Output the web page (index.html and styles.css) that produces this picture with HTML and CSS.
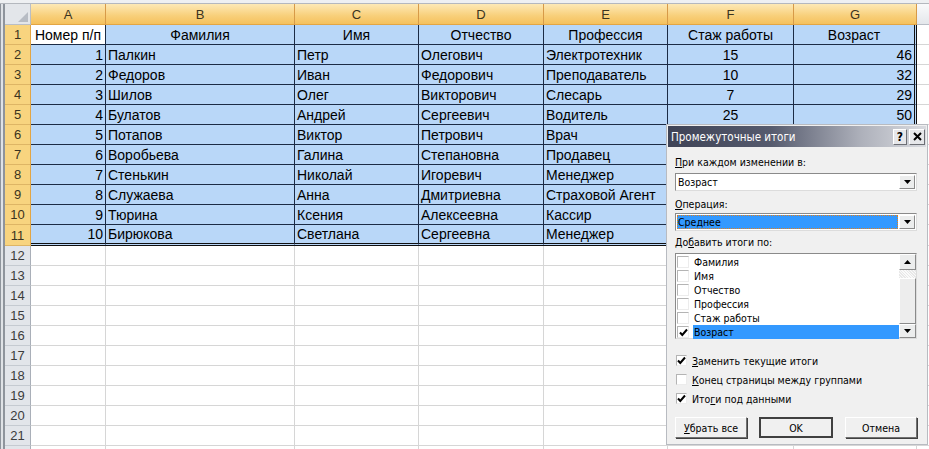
FILE: index.html
```html
<!DOCTYPE html>
<html lang="ru">
<head>
    <meta charset="UTF-8">
    <title>Промежуточные итоги</title>
    <link rel="stylesheet" href="styles.css">
</head>
<body>
<div class="sheet">
    <table class="grid">
        <thead>
            <tr>
                <th class="corner"><svg width="10" height="10" viewBox="0 0 10 10"><polygon points="10,0 10,10 0,10" fill="#b7bcc4"/></svg></th>
                <th class="ch on w-a">A</th>
                <th class="ch on w-b">B</th>
                <th class="ch on w-c">C</th>
                <th class="ch on w-d">D</th>
                <th class="ch on w-e">E</th>
                <th class="ch on w-f">F</th>
                <th class="ch on w-g">G</th>
                <th class="ch w-h"></th>
            </tr>
        </thead>
        <tbody>
            <tr class="s"><th class="rh on">1</th><td class="c act">Номер п/п</td><td class="c">Фамилия</td><td class="c">Имя</td><td class="c">Отчество</td><td class="c">Профессия</td><td class="c">Стаж работы</td><td class="c g">Возраст</td><td class="x"></td></tr>
            <tr class="s"><th class="rh on">2</th><td class="r">1</td><td>Палкин</td><td>Петр</td><td>Олегович</td><td>Электротехник</td><td class="c">15</td><td class="r g">46</td><td class="x"></td></tr>
            <tr class="s"><th class="rh on">3</th><td class="r">2</td><td>Федоров</td><td>Иван</td><td>Федорович</td><td>Преподаватель</td><td class="c">10</td><td class="r g">32</td><td class="x"></td></tr>
            <tr class="s"><th class="rh on">4</th><td class="r">3</td><td>Шилов</td><td>Олег</td><td>Викторович</td><td>Слесарь</td><td class="c">7</td><td class="r g">29</td><td class="x"></td></tr>
            <tr class="s"><th class="rh on">5</th><td class="r">4</td><td>Булатов</td><td>Андрей</td><td>Сергеевич</td><td>Водитель</td><td class="c">25</td><td class="r g">50</td><td class="x"></td></tr>
            <tr class="s"><th class="rh on">6</th><td class="r">5</td><td>Потапов</td><td>Виктор</td><td>Петрович</td><td>Врач</td><td class="c"></td><td class="r g"></td><td class="x"></td></tr>
            <tr class="s"><th class="rh on">7</th><td class="r">6</td><td>Воробьева</td><td>Галина</td><td>Степановна</td><td>Продавец</td><td class="c"></td><td class="r g"></td><td class="x"></td></tr>
            <tr class="s"><th class="rh on">8</th><td class="r">7</td><td>Стенькин</td><td>Николай</td><td>Игоревич</td><td>Менеджер</td><td class="c"></td><td class="r g"></td><td class="x"></td></tr>
            <tr class="s"><th class="rh on">9</th><td class="r">8</td><td>Служаева</td><td>Анна</td><td>Дмитриевна</td><td>Страховой Агент</td><td class="c"></td><td class="r g"></td><td class="x"></td></tr>
            <tr class="s"><th class="rh on">10</th><td class="r">9</td><td>Тюрина</td><td>Ксения</td><td>Алексеевна</td><td>Кассир</td><td class="c"></td><td class="r g"></td><td class="x"></td></tr>
            <tr class="s last"><th class="rh on">11</th><td class="r">10</td><td>Бирюкова</td><td>Светлана</td><td>Сергеевна</td><td>Менеджер</td><td class="c"></td><td class="r g"></td><td class="x"></td></tr>
            <tr><th class="rh">12</th><td></td><td></td><td></td><td></td><td></td><td></td><td></td><td></td></tr>
            <tr><th class="rh">13</th><td></td><td></td><td></td><td></td><td></td><td></td><td></td><td></td></tr>
            <tr><th class="rh">14</th><td></td><td></td><td></td><td></td><td></td><td></td><td></td><td></td></tr>
            <tr><th class="rh">15</th><td></td><td></td><td></td><td></td><td></td><td></td><td></td><td></td></tr>
            <tr><th class="rh">16</th><td></td><td></td><td></td><td></td><td></td><td></td><td></td><td></td></tr>
            <tr><th class="rh">17</th><td></td><td></td><td></td><td></td><td></td><td></td><td></td><td></td></tr>
            <tr><th class="rh">18</th><td></td><td></td><td></td><td></td><td></td><td></td><td></td><td></td></tr>
            <tr><th class="rh">19</th><td></td><td></td><td></td><td></td><td></td><td></td><td></td><td></td></tr>
            <tr><th class="rh">20</th><td></td><td></td><td></td><td></td><td></td><td></td><td></td><td></td></tr>
            <tr><th class="rh">21</th><td></td><td></td><td></td><td></td><td></td><td></td><td></td><td></td></tr>
            <tr><th class="rh"></th><td></td><td></td><td></td><td></td><td></td><td></td><td></td><td></td></tr>
        </tbody>
    </table>

    <!-- диалог поверх листа -->
    <div class="dialog">
        <div class="dlg-title">
            <span class="dlg-caption">Промежуточные итоги</span>
            <span class="tbtn help">?</span>
            <span class="tbtn close"><svg width="9" height="9" viewBox="0 0 9 9"><path d="M1 1 L8 8 M8 1 L1 8" stroke="#000" stroke-width="2"/></svg></span>
        </div>
        <div class="dlg-body">
            <div class="lbl lbl-first"><u>П</u>ри каждом изменении в:</div>
            <div class="combo">
                <span class="combo-val">Возраст</span>
                <span class="drop"><svg width="7" height="4" viewBox="0 0 7 4"><polygon points="0,0 7,0 3.5,4" fill="#000"/></svg></span>
            </div>
            <div class="lbl lbl-op"><u>О</u>перация:</div>
            <div class="combo">
                <span class="combo-val picked">Среднее</span>
                <span class="drop"><svg width="7" height="4" viewBox="0 0 7 4"><polygon points="0,0 7,0 3.5,4" fill="#000"/></svg></span>
            </div>
            <div class="lbl lbl-add">До<u>б</u>авить итоги по:</div>
            <div class="listbox">
                <div class="items">
                    <div class="item"><span class="box"></span><span class="item-text">Фамилия</span></div>
                    <div class="item"><span class="box"></span><span class="item-text">Имя</span></div>
                    <div class="item"><span class="box"></span><span class="item-text">Отчество</span></div>
                    <div class="item"><span class="box"></span><span class="item-text">Профессия</span></div>
                    <div class="item"><span class="box"></span><span class="item-text">Стаж работы</span></div>
                    <div class="item"><span class="box"><svg width="9" height="9" viewBox="0 0 9 9"><path d="M1 4.5 L3.3 7 L8 1.5" stroke="#000" stroke-width="2" fill="none"/></svg></span><span class="item-text hl">Возраст</span></div>
                </div>
                <div class="vscroll">
                    <span class="sbtn"><svg width="7" height="4" viewBox="0 0 7 4"><polygon points="0,4 7,4 3.5,0" fill="#000"/></svg></span>
                    <span class="track"></span>
                    <span class="thumb"></span>
                    <span class="sbtn"><svg width="7" height="4" viewBox="0 0 7 4"><polygon points="0,0 7,0 3.5,4" fill="#000"/></svg></span>
                </div>
            </div>
            <div class="checks">
                <div class="chk"><span class="box"><svg width="9" height="9" viewBox="0 0 9 9"><path d="M1 4.5 L3.3 7 L8 1.5" stroke="#000" stroke-width="2" fill="none"/></svg></span><span><u>З</u>аменить текущие итоги</span></div>
                <div class="chk"><span class="box"></span><span><u>К</u>онец страницы между группами</span></div>
                <div class="chk"><span class="box"><svg width="9" height="9" viewBox="0 0 9 9"><path d="M1 4.5 L3.3 7 L8 1.5" stroke="#000" stroke-width="2" fill="none"/></svg></span><span>Ито<u>г</u>и под данными</span></div>
            </div>
            <div class="buttons">
                <button class="btn"><u>У</u>брать все</button>
                <button class="btn default">OK</button>
                <button class="btn">Отмена</button>
            </div>
        </div>
    </div>
</div>
</body>
</html>
```

FILE: styles.css
```css
* {
    margin: 0;
    padding: 0;
    box-sizing: border-box;
}

body {
    width: 929px;
    height: 449px;
    overflow: hidden;
    background: #fff;
    font-family: "Liberation Sans", Arial, sans-serif;
}

.sheet {
    position: relative;
    height: 449px;
    padding: 4px 0 0 5px;
    background:
        linear-gradient(#eef0f2 0 3px, #b4b8be 3px 4px) top left / 100% 4px no-repeat,
        linear-gradient(to right, #8e949c 0 1px, #dfe2e6 1px 3px, #8e949c 3px 5px) top left / 5px 100% no-repeat;
}

/* ---- сетка листа ---- */
.grid {
    border-collapse: separate;
    border-spacing: 0;
    table-layout: fixed;
    width: 972px;
}

.grid td {
    height: 20px;
    padding: 0 2px;
    border-right: 1px solid #d6d6d6;
    border-bottom: 1px solid #d6d6d6;
    font-size: 14px;
    line-height: 18px;
    color: #000;
    white-space: nowrap;
    overflow: hidden;
}

.grid td.r { text-align: right; }
.grid td.c { text-align: center; }

.corner {
    width: 26px;
    height: 21px;
    background: #e3e6ea;
    border-right: 1px solid #b9bec6;
    border-bottom: 1px solid #b9bec6;
    text-align: right;
    vertical-align: bottom;
    padding: 0 2px 2px 0;
    line-height: 0;
}

.ch {
    height: 21px;
    font-size: 13px;
    font-weight: normal;
    color: #3a3a3a;
    background: linear-gradient(#f9fafb, #e4e7eb);
    border-right: 1px solid #c0c5cc;
    border-bottom: 1px solid #b9bec6;
}

.ch.on {
    background: linear-gradient(#fde9b6, #f8cf79 60%, #f5c15d);
    border-right: 1px solid #d79a48;
    border-bottom: 1px solid #e3a543;
    color: #3b3320;
}

.w-a { width: 75px; }
.w-b { width: 189px; }
.w-c { width: 124px; }
.w-d { width: 125px; }
.w-e { width: 124px; }
.w-f { width: 126px; }
.w-g { width: 123px; }
.w-h { width: 60px; }

.rh {
    height: 20px;
    font-size: 13px;
    font-weight: normal;
    color: #3c3c3c;
    background: #e2e5ea;
    border-right: 1px solid #a9afb8;
    border-bottom: 1px solid #c5cad1;
}

.rh.on {
    background: #f8d47f;
    border-right: 1px solid #e3a543;
    border-bottom: 1px solid #deb565;
    color: #3b3320;
}

/* выделенный диапазон A1:G11 */
tr.s td {
    background: #b9d7f8;
    border-right-color: #1c2b45;
    border-bottom-color: #1c2b45;
}

tr.s td.act { background: #fff; }

tr.s td.g { border-right: 3px double #111; }

tr.s td.x {
    background: #fff;
    border-right-color: #d6d6d6;
    border-bottom-color: #d6d6d6;
}

tr.last td { border-bottom: 3px double #111; }
tr.last td.x { border-bottom: 1px solid #d6d6d6; }

/* ---- окно "Промежуточные итоги" ---- */
.dialog {
    position: absolute;
    left: 666px;
    top: 124px;
    width: 262px;
    height: 321px;
    background: #f0f0f0;
    border: 1px solid #b8bbc1;
    padding: 1px;
    font-family: "DejaVu Sans Condensed", "Liberation Sans", sans-serif;
    font-size: 10.5px;
    color: #000;
}

.dlg-title {
    height: 21px;
    display: flex;
    align-items: center;
    padding: 0 1px 0 3px;
    background: linear-gradient(to right, #3e4356, #565b6e 40%, #aeb1bb 75%, #d9dbe0);
}

.dlg-caption {
    flex: 1;
    color: #fff;
    font-size: 11.5px;
}

.tbtn {
    width: 14px;
    height: 16px;
    display: flex;
    align-items: center;
    justify-content: center;
    background: #e6e7ea;
    border: 1px solid;
    border-color: #fff #6d6f75 #6d6f75 #fff;
    font-weight: bold;
    font-size: 12px;
    margin-left: 2px;
}

.tbtn.close { width: 16px; }

.dlg-body {
    padding: 0 9px 0 7px;
}

.lbl {
    height: 13px;
    line-height: 13px;
    margin: 7px 0 4px;
}

.lbl-first { margin-top: 9px; }
.lbl-op { margin-bottom: 2px; }
.lbl-add { margin-top: 5px; }

.combo {
    height: 18px;
    display: flex;
    background: #fff;
    border: 1px solid;
    border-color: #8a8a8a #dcdcdc #dcdcdc #8a8a8a;
    padding: 1px;
}

.combo-val {
    flex: 1;
    line-height: 14px;
    padding-left: 1px;
}

.combo-val.picked {
    background: #3399ff;
    outline: 1px dotted #e0801e;
    outline-offset: -1px;
    margin-right: 1px;
}

.drop, .sbtn {
    width: 16px;
    display: flex;
    align-items: center;
    justify-content: center;
    background: #eceded;
    border: 1px solid;
    border-color: #fff #8a8a8a #8a8a8a #fff;
}

.listbox {
    height: 86px;
    display: flex;
    background: #fff;
    border: 1px solid;
    border-color: #8a8a8a #dcdcdc #dcdcdc #8a8a8a;
}

.items {
    flex: 1;
    padding-top: 1px;
}

.item {
    height: 14px;
    display: flex;
    align-items: center;
    padding-left: 1px;
}

.box {
    width: 12px;
    height: 12px;
    display: flex;
    align-items: center;
    justify-content: center;
    background: #fff;
    border: 1px solid;
    border-color: #b4b4b4 #ececec #ececec #b4b4b4;
    margin-right: 4px;
    flex-shrink: 0;
}

.item-text {
    flex: 1;
    height: 14px;
    line-height: 14px;
    padding-left: 1px;
}

.item-text.hl { background: #3399ff; }

.vscroll {
    width: 17px;
    display: flex;
    flex-direction: column;
    background: #f4f4f4;
}

.vscroll .sbtn {
    width: 17px;
    height: 16px;
}

.vscroll .sbtn:last-child { height: 14px; }

.track {
    height: 8px;
    background: repeating-linear-gradient(45deg, #e8e8e8 0 1px, #fafafa 1px 2px);
}

.thumb {
    flex: 1;
    background: #ededed;
    border: 1px solid;
    border-color: #fff #8a8a8a #8a8a8a #fff;
}

.checks {
    margin-top: 15px;
    display: flex;
    flex-direction: column;
    gap: 6px;
}

.chk {
    height: 13px;
    display: flex;
    align-items: center;
    padding-left: 1px;
}

.chk .box {
    width: 11px;
    height: 11px;
    margin-right: 5px;
}

.buttons {
    display: flex;
    gap: 12px;
    margin-top: 12px;
}

.btn {
    width: 72px;
    height: 21px;
    font-family: "DejaVu Sans Condensed", "Liberation Sans", sans-serif;
    font-size: 10.5px;
    color: #000;
    background: #f0f0f0;
    border: 1px solid;
    border-color: #fff #707070 #707070 #fff;
    box-shadow: 1px 1px 0 #404040;
}

.btn.default {
    width: 74px;
    border: 2px solid #404040;
    box-shadow: none;
}
```
